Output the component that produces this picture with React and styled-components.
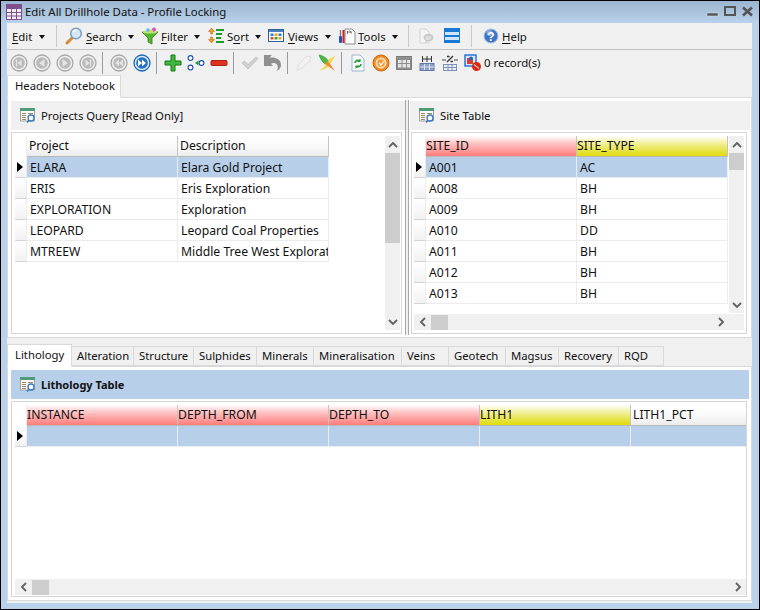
import React from "react";
import styled, { createGlobalStyle } from "styled-components";

const FONT = `"Noto Sans", "Open Sans", "Liberation Sans", sans-serif`;

const Global = createGlobalStyle`
  html, body { margin: 0; padding: 0; background: #b9d1ea; }
  * { box-sizing: border-box; }
`;

const Win = styled.div`
  width: 760px; height: 610px; border: 1px solid #000; background: #b9d1ea;
  display: flex; flex-direction: column; overflow: hidden;
  font: 11.4px/16px ${FONT}; color: #111;
`;
const TitleBar = styled.div`
  height: 22px; flex: none; display: flex; align-items: center; padding: 0 3px 0 5px;
  background: linear-gradient(#9cb5d0, #b9d1ea);
`;
const TitleText = styled.div`margin-left: 3px; flex: 1; white-space: nowrap;`;
const Client = styled.div`
  height: 580px; margin: 0 7px 0 6px; background: #f0f0f0; display: flex; flex-direction: column;
`;
const MenuBar = styled.div`
  height: 27px; flex: none; display: flex; align-items: center; border-bottom: 1px solid #c2c2c2;
`;
const MenuBtn = styled.div`
  width: ${p => p.$w}px; flex: none; display: flex; align-items: center; height: 100%;
`;
const MenuLabel = styled.span`
  width: ${p => p.$w}px; margin-left: ${p => p.$ml ?? 3}px; margin-top: 2px; flex: none; white-space: nowrap;
  u { text-underline-offset: 2px; }
`;
const Caret = styled.i`
  width: 0; height: 0; margin-left: ${p => p.$ml || 6.5}px; margin-top: 1px; flex: none;
  border-left: 3.5px solid transparent; border-right: 3.5px solid transparent; border-top: 4px solid #111;
`;
const BarSep = styled.div`
  width: 1px; height: 22px; flex: none; background: #c8c8c8; margin-left: ${p => p.$ml}px; margin-right: ${p => p.$mr}px;
`;
const NavBar = styled.div`height: 25px; flex: none; display: flex; align-items: center;`;
const Cell = styled.div`
  width: 23px; height: 22px; flex: none; display: flex; align-items: center; justify-content: center;
  margin-left: ${p => p.$ml || 0}px;
`;
const NavSep = styled.div`
  width: 6px; height: 22px; margin-right: 2px; flex: none; position: relative;
  &::before { content: ""; position: absolute; left: 3px; top: 0; bottom: 0; width: 1px; background: #9a9a9a; }
`;
const Records = styled.div`white-space: nowrap;`;
const TabStrip = styled.div`
  height: ${p => p.$h}px; flex: none; display: flex; align-items: flex-end; margin-top: ${p => p.$mt || 0}px; position: relative; z-index: 1;
`;
const Tab = styled.div`
  width: ${p => p.$w}px; flex: none; white-space: nowrap; padding-left: ${p => (p.$active ? 7 : 5)}px;
  height: ${p => (p.$active ? 23 : 20)}px; line-height: ${p => (p.$active ? 20 : 18)}px; font-size: 11.3px;
  border: 1px solid #d9d9d9; border-left-width: ${p => (p.$active ? 1 : 0)}px;
  border-bottom-color: ${p => (p.$active ? "#fff" : "#d9d9d9")};
  background: ${p => (p.$active ? "#fff" : "#f0f0f0")};
  margin-bottom: ${p => (p.$active ? -1 : 0)}px;
`;
const UpperPanel = styled.div`
  height: 241px; flex: none; background: #fff; border: 1px solid #d9d9d9; padding: 3px 1px 3px 3px; display: flex;
`;
const Pane = styled.div`width: ${p => p.$w}px; flex: none; display: flex; flex-direction: column;`;
const Splitter = styled.div`
  width: 4px; margin: -1px 1px -1px 0; flex: none; border-left: 1px solid #a8a8a8; border-right: 1px solid #a8a8a8; background: #f0f0f0;
`;
const PaneHead = styled.div`
  height: 29px; flex: none; display: flex; align-items: center; gap: 4px; padding-left: 8px;
  background: ${p => (p.$blue ? "#b8cfe9" : "#f0f0f0")};
  font-weight: ${p => (p.$blue ? 700 : 400)};
  font-size: ${p => (p.$blue ? 11 : 11.3)}px;
`;
const GridBox = styled.div`
  flex: 1; min-height: 0; margin: 2px ${p => p.$mr}px 0 ${p => p.$ml || 0}px; border: 1px solid #d6d6d6; background: #fff;
  padding: 3px 0 ${p => p.$pb}px ${p => p.$pl}px; display: flex; overflow: hidden;
`;
const GridMain = styled.div`flex: 1; min-width: 0; display: flex; flex-direction: column;`;
const Rows = styled.div`flex: 1; min-height: 0; overflow: hidden;`;
const Row = styled.div`display: flex; height: 21px; width: ${p => p.$w}px;`;
const Indicator = styled.div`
  width: 12px; flex: none; border-bottom: 1px solid ${p => (p.$head ? "transparent" : "#d4d4d4")};
  background: ${p => (p.$head ? "#fff" : "linear-gradient(#fff,#f2f2f2)")};
  border-right: 1px solid #ececec; display: flex; align-items: center; padding-left: 2px;
  &::after {
    content: ""; display: ${p => (p.$on ? "block" : "none")}; width: 0; height: 0;
    border-left: 6px solid #000; border-top: 5px solid transparent; border-bottom: 5px solid transparent;
  }
`;
const HEAD = {
  red: "linear-gradient(#fff 0%, #ffc6c6 35%, #ff7c7c 100%)",
  yellow: "linear-gradient(#fff 0%, #f0ee90 40%, #dfdb0a 100%)",
  plain: "linear-gradient(#fff 0%, #fafafa 50%, #ececec 100%)",
};
const HeadCell = styled.div`
  width: 151px; flex: none; height: 21px; line-height: 20px; font-size: 12.2px; padding-left: ${p => (p.$tone ? 0 : 2)}px; white-space: nowrap; overflow: hidden;
  background: ${p => HEAD[p.$tone || "plain"]};
  border-right: 1px solid #c4c4c4; border-bottom: 1px solid #b9b9b9;
`;
const DataCell = styled.div`
  width: 151px; flex: none; height: 21px; line-height: 21px; font-size: 12.2px; padding-left: 3px; white-space: nowrap; overflow: hidden;
  background: ${p => (p.$sel ? "#b8cfe9" : "#fff")};
  border-right: 1px solid ${p => (p.$sel ? "#e6eef7" : "#ececec")}; border-bottom: 1px solid #ececec;
`;
const VScroll = styled.div`
  width: 15px; flex: none; background: #f0f0f0; margin: ${p => p.$m}; display: flex; flex-direction: column; align-items: center;
`;
const VThumb = styled.div`width: 15px; height: ${p => p.$h}px; flex: none; background: #cdcdcd;`;
const VSpace = styled.div`flex: 1;`;
const ArrowBox = styled.div`height: 17px; flex: none; display: flex; align-items: center; justify-content: center;`;
const HScroll = styled.div`
  height: 16px; flex: none; background: #f0f0f0; display: flex; align-items: center; margin-right: ${p => p.$mr || 0}px;
`;
const HArrow = styled.div`width: 17px; height: 16px; flex: none; display: flex; align-items: center; justify-content: center;`;
const HThumb = styled.div`width: 17px; height: 15px; flex: none; background: #cdcdcd;`;
const HSpace = styled.div`flex: 1;`;
const HTail = styled.div`width: ${p => p.$w}px; flex: none;`;
const LowerPanel = styled.div`
  flex: none; height: 235px; background: #fff; border: 1px solid #d9d9d9; padding: 3px 2px 3px 3px; display: flex; flex-direction: column;
`;

const Svg = ({ s = 18, children }) => <svg width={s} height={s} viewBox={`0 0 ${s} ${s}`} style={{ display: "block", flex: "none" }}>{children}</svg>;

const AppIcon = () => (
  <Svg s={16}>
    <rect width="16" height="16" fill="#7d4f8c" />
    <rect x="1" y="5" width="14" height="10" fill="#f4eff6" />
    <path d="M5.500 5v10M10.500 5v10M1 8.500h14M1 12h14" stroke="#7d4f8c" strokeWidth="1" />
  </Svg>
);
const WinControls = () => (
  <svg width="50" height="12" viewBox="0 0 50 12" style={{ display: "block", flex: "none" }}>
    <rect x="1" y="7" width="11" height="3" fill="#555" stroke="#d6e2ef" strokeWidth=".5" />
    <rect x="19" y="1" width="10" height="8" fill="none" stroke="#555" strokeWidth="2" />
    <path d="M37 1.500l9 8M46 1.500l-9 8" stroke="#555" strokeWidth="2.600" />
  </svg>
);
const SearchIcon = () => (
  <Svg>
    <path d="M8 10L2 16" stroke="#d98a35" strokeWidth="3" strokeLinecap="round" />
    <circle cx="11" cy="6.500" r="5.300" fill="#d5e7f6" stroke="#7f9cb6" strokeWidth="1.500" />
    <path d="M8 5c1-1.500 2.500-2 4-1.800" stroke="#fff" strokeWidth="1.400" fill="none" />
  </Svg>
);
const FilterIcon = () => (
  <Svg>
    <path d="M1 5h16l-6 6v6l-4-2v-4z" fill="#55b52c" stroke="#2e7d16" strokeWidth=".8" />
    <ellipse cx="9" cy="5" rx="7.500" ry="1.600" fill="#b6e67e" />
    <circle cx="13" cy="2.500" r="2" fill="#e04fc0" />
    <circle cx="7" cy="3" r="1.800" fill="#4fc0e0" />
    <circle cx="10" cy="4" r="1.400" fill="#f0d040" />
  </Svg>
);
const SortIcon = () => (
  <Svg>
    <path d="M4.500 1l3 3.500h-2v2.500h-2V4.500h-2zM4.500 16l3-3.500h-2V10h-2v2.500h-2z" fill="#ef9a2c" stroke="#b86a10" strokeWidth=".5" />
    <path d="M9 3h8M9 7h6M9 11h5M9 15h8" stroke="#189c2c" strokeWidth="2" />
  </Svg>
);
const ViewsIcon = () => (
  <Svg s={16}>
    <rect x=".5" y="1.500" width="15" height="12" fill="#fff" stroke="#2f5e9c" />
    <rect x="1" y="2" width="14" height="2" fill="#4a7fc0" />
    <rect x="2.500" y="5.500" width="3" height="2.500" fill="#3c78c8" />
    <rect x="6.500" y="5.500" width="3" height="2.500" fill="#e8a020" />
    <rect x="10.500" y="5.500" width="3" height="2.500" fill="#3c78c8" />
    <rect x="2.500" y="9" width="3" height="2.500" fill="#e05030" />
    <rect x="6.500" y="9" width="3" height="2.500" fill="#40a040" />
    <rect x="10.500" y="9" width="3" height="2.500" fill="#e8a020" />
  </Svg>
);
const ToolsIcon = () => (
  <Svg>
    <path d="M7 2h7l3 3v12H7z" fill="#fff" stroke="#8a8a8a" />
    <path d="M9.500 4v3M11.500 3.500l2 3M9 5h5" stroke="#555" strokeWidth=".8" />
    <path d="M2.500 3v6" stroke="#777" strokeWidth="1.300" />
    <rect x="1" y="9" width="3" height="7" rx="1" fill="#1e56b8" />
    <path d="M5.500 3v13" stroke="#d02020" strokeWidth="2" />
  </Svg>
);
const DocBubbleIcon = () => (
  <Svg s={16}>
    <path d="M2 1h6l3 3v11H2z" fill="#f4f4f4" stroke="#d2d2d2" />
    <ellipse cx="10.500" cy="9.500" rx="5" ry="3.800" fill="#c8c8c8" />
    <path d="M7.500 9h6M7.500 11h5" stroke="#f2f2f2" />
    <path d="M8 12l-1 3 3-2z" fill="#c8c8c8" />
  </Svg>
);
const SplitIcon = () => (
  <Svg s={16}>
    <rect x=".5" y=".5" width="15" height="14" fill="#fff" stroke="#1878d4" />
    <rect x="1" y="1" width="14" height="3" fill="#1878d4" />
    <rect x="1" y="7" width="14" height="2" fill="#1878d4" />
    <rect x="1" y="12" width="14" height="2" fill="#1878d4" />
    <rect x="1" y="4" width="14" height="3" fill="#cfe6fa" />
    <rect x="1" y="9" width="14" height="3" fill="#cfe6fa" />
  </Svg>
);
const HelpIcon = () => (
  <Svg s={16}>
    <circle cx="8" cy="8" r="7" fill="#3f74c4" stroke="#a8c4e6" />
    <circle cx="6.500" cy="5" r="3" fill="#86abe0" />
    <text x="8" y="12.500" textAnchor="middle" fontSize="12" fontWeight="700" fontFamily="Liberation Sans" fill="#fff">?</text>
  </Svg>
);
const TableIcon = () => (
  <Svg>
    <path d="M1.500 2h14v12h-14z" fill="#fafafa" stroke="#9aa5a0" />
    <rect x="1" y="1" width="15" height="3" fill="#4f9a78" />
    <path d="M3 6.500h4M3 8.500h4M3 10.500h4M3 12.500h4M9 6.500h5" stroke="#a08868" />
    <circle cx="12" cy="11" r="3" fill="#fff" stroke="#3c78c0" strokeWidth="1.300" />
    <path d="M10 13.200L8 15.500" stroke="#3c78c0" strokeWidth="1.600" />
  </Svg>
);

const NavCircle = ({ kind, active }) => {
  const c = active ? "#1f6fc4" : "#b9b9b9";
  const fg = active ? "#fff" : "#e4e4e4";
  const marks = {
    first: <><path d="M11.500 5.500v7L7.500 9z" fill={fg} /><path d="M6.500 5.500v7" stroke={fg} strokeWidth="1.400" /></>,
    prev: <path d="M11.500 5v8L6 9z" fill={fg} />,
    next: <path d="M6.500 5v8L12 9z" fill={fg} />,
    last: <><path d="M6.500 5.500v7l4-3.500z" fill={fg} /><path d="M11.500 5.500v7" stroke={fg} strokeWidth="1.400" /></>,
    back: <path d="M9 5.500v7L5 9zM13 5.500v7L9 9z" fill={fg} />,
    fwd: <path d="M5 5.500v7L9 9zM9 5.500v7L13 9z" fill={fg} />,
  };
  return (
    <Svg>
      <circle cx="9" cy="9" r="8" fill={active ? "#d8e8f8" : "#ededed"} stroke={active ? "#1c68b8" : "#a8a8a8"} strokeWidth="1.300" />
      <circle cx="9" cy="9" r="5.800" fill={c} />
      {marks[kind]}
    </Svg>
  );
};
const PlusIcon = () => (
  <Svg><path d="M7 1h4v6h6v4h-6v6H7v-6H1V7h6z" fill="#3fb63f" stroke="#167816" /></Svg>
);
const BranchIcon = () => (
  <Svg>
    <circle cx="3.500" cy="4" r="2.400" fill="#fff" stroke="#1c50b0" strokeWidth="1.100" />
    <circle cx="3.500" cy="13.500" r="2.400" fill="#fff" stroke="#1c50b0" strokeWidth="1.100" />
    <circle cx="14.500" cy="9" r="2.400" fill="#fff" stroke="#1c50b0" strokeWidth="1.100" />
    <path d="M8 9l3.500-2.500v5z" fill="#2a9a3a" />
  </Svg>
);
const MinusIcon = () => (
  <Svg><rect x="1" y="6.500" width="16" height="5" rx="1" fill="#e03020" stroke="#a82418" /></Svg>
);
const CheckIcon = () => (
  <Svg><path d="M1 9l2.500-2 3.500 3.500L15 3l2 1.500L7 15z" fill="#cfcfcf" stroke="#b4b4b4" strokeWidth=".6" /></Svg>
);
const UndoIcon = () => (
  <Svg>
    <path d="M0 1l8 0-2.500 2.800C10 2.500 17 5 17 10.500c0 3-1.500 5.500-4.500 6.500 2-2.500 2-6.500-1.500-7.800-1.500-.5-3-.3-4 .6L9 12H0z" fill="#8f8f8f" />
  </Svg>
);
const PenIcon = () => (
  <Svg><path d="M2 16l2-6 8-8 4 1-1 4-8 7z" fill="#f2f2f2" stroke="#dedede" /></Svg>
);
const XFunnelIcon = () => (
  <Svg>
    <path d="M17 2l-6 3-5 8-5 4 8-3 5-7z" fill="#f4d84a" />
    <path d="M1 1c3 0 8 3 9 6l-3 3C4 8 2 4 1 1z" fill="#4cb84c" stroke="#2a8a2a" strokeWidth=".5" />
    <path d="M10 7l7 10-10-7z" fill="#f08a28" />
  </Svg>
);
const RefreshDocIcon = () => (
  <Svg>
    <path d="M3 1h8l4 4v12H3z" fill="#f6fafc" stroke="#9fb6c8" />
    <path d="M6 9a3 3 0 0 1 5-2M12 10a3 3 0 0 1-5 2" fill="none" stroke="#1f9a2c" strokeWidth="1.600" />
    <path d="M11.500 4.500v3.500H8zM6.500 15v-3.500H10z" fill="#1f9a2c" />
  </Svg>
);
const OrangeIcon = () => (
  <Svg>
    <circle cx="9" cy="9" r="8" fill="#f08a24" stroke="#c86a10" />
    <circle cx="9" cy="9" r="5.500" fill="#fde0b8" />
    <circle cx="9" cy="9" r="3.800" fill="#f29a38" />
    <path d="M7 9l2 2 3-4" fill="none" stroke="#fff" strokeWidth="1.200" />
  </Svg>
);
const CalendarIcon = () => (
  <Svg>
    <rect x="1.500" y="2.500" width="15" height="13" fill="#8e8e8e" stroke="#7c7c7c" />
    <rect x="3" y="6" width="3.500" height="3" fill="#e4e4e4" /><rect x="7.500" y="6" width="3.500" height="3" fill="#e4e4e4" /><rect x="12" y="6" width="3" height="3" fill="#e4e4e4" />
    <rect x="3" y="10" width="3.500" height="3.500" fill="#e4e4e4" /><rect x="7.500" y="10" width="3.500" height="3.500" fill="#e4e4e4" /><rect x="12" y="10" width="3" height="3.500" fill="#e4e4e4" />
  </Svg>
);
const ColWidthIcon = () => (
  <Svg>
    <path d="M4.500 2v6M13.500 2v6M9 2v6M5 5h8" stroke="#333" strokeWidth="1" />
    <rect x="2" y="9.500" width="14" height="7" fill="#8f9fc8" stroke="#6678a8" />
    <path d="M2 13h14M6.500 10v6M11.500 10v6" stroke="#dfe4f2" />
  </Svg>
);
const PercentIcon = () => (
  <Svg>
    <path d="M1 6h4M13 6h4" stroke="#444" strokeWidth="1" />
    <path d="M6 8l6-6M6 2.500h2.500M9.500 7.500H12" stroke="#333" strokeWidth="1.400" />
    <rect x="2.500" y="10.500" width="13" height="6" fill="#e9eefa" stroke="#7f90b8" />
    <path d="M2.500 13.500h13M7 10.500v6M11 10.500v6" stroke="#7f90b8" />
  </Svg>
);
const RecordIcon = () => (
  <Svg>
    <rect x="1" y="1" width="11" height="11" fill="#dbe8f8" stroke="#1f6fd0" strokeWidth="1.400" />
    <rect x="3" y="4" width="6" height="6" fill="#d84030" />
    <circle cx="7" cy="4.500" r="2" fill="#3060c0" />
    <circle cx="12.500" cy="12.500" r="4.500" fill="#d82818" />
    <path d="M10 10.500l5 4" stroke="#fff" strokeWidth="1" />
  </Svg>
);
const Chevron = ({ dir }) => {
  const d = { up: "M1 6l4-4 4 4", down: "M1 2l4 4 4-4", left: "M6 1L2 5l4 4", right: "M2 1l4 4-4 4" }[dir];
  const s = dir === "up" || dir === "down";
  return (
    <svg width={s ? 10 : 8} height={s ? 8 : 10} viewBox={s ? "0 0 10 8" : "0 0 8 10"} style={{ display: "block" }}>
      <path d={d} fill="none" stroke="#606060" strokeWidth="1.800" />
    </svg>
  );
};

const VBar = ({ thumb, m }) => (
  <VScroll $m={m}>
    <ArrowBox><Chevron dir="up" /></ArrowBox>
    <VThumb $h={thumb} />
    <VSpace />
    <ArrowBox><Chevron dir="down" /></ArrowBox>
  </VScroll>
);
const HBar = ({ mr, tail = 0 }) => (
  <HScroll $mr={mr}>
    <HArrow><Chevron dir="left" /></HArrow>
    <HThumb />
    <HSpace />
    <HArrow><Chevron dir="right" /></HArrow>
    <HTail $w={tail} />
  </HScroll>
);

const HeaderRow = ({ cols, w }) => (
  <Row $w={w}>
    <Indicator $head />
    {cols.map(c => <HeadCell key={c.t} $tone={c.tone}>{c.t}</HeadCell>)}
  </Row>
);
const DataRow = ({ vals, sel, w }) => (
  <Row $w={w}>
    <Indicator $on={sel} />
    {vals.map((v, i) => <DataCell key={i} $sel={sel}>{v}</DataCell>)}
  </Row>
);

const projects = [
  ["ELARA", "Elara Gold Project"],
  ["ERIS", "Eris Exploration"],
  ["EXPLORATION", "Exploration"],
  ["LEOPARD", "Leopard Coal Properties"],
  ["MTREEW", "Middle Tree West Exploration"],
];
const sites = [["A001", "AC"], ["A008", "BH"], ["A009", "BH"], ["A010", "DD"], ["A011", "BH"], ["A012", "BH"], ["A013", "BH"]];
const lowerTabs = [
  ["Alteration", 62], ["Structure", 60], ["Sulphides", 63], ["Minerals", 57], ["Mineralisation", 88],
  ["Veins", 47], ["Geotech", 57], ["Magsus", 53], ["Recovery", 60], ["RQD", 45],
];
const navA = ["first", "prev", "next", "last"];

export default function App() {
  return (
    <>
      <Global />
      <Win>
        <TitleBar>
          <AppIcon />
          <TitleText>Edit All Drillhole Data - Profile Locking</TitleText>
          <WinControls />
        </TitleBar>
        <Client>
          <MenuBar>
            <MenuBtn $w={43}><MenuLabel $w={20} $ml={5}><u>E</u>dit</MenuLabel><Caret /></MenuBtn>
            <BarSep $ml={6} $mr={8} />
            <MenuBtn $w={76}><SearchIcon /><MenuLabel $w={35}><u>S</u>earch</MenuLabel><Caret /></MenuBtn>
            <MenuBtn $w={66}><FilterIcon /><MenuLabel $w={26} $ml={2}><u>F</u>ilter</MenuLabel><Caret /></MenuBtn>
            <MenuBtn $w={61}><SortIcon /><MenuLabel $w={21} $ml={2}>S<u>o</u>rt</MenuLabel><Caret /></MenuBtn>
            <MenuBtn $w={70}><ViewsIcon /><MenuLabel $w={30} $ml={4}><u>V</u>iews</MenuLabel><Caret $ml={7} /></MenuBtn>
            <MenuBtn $w={62}><ToolsIcon /><MenuLabel $w={27} $ml={2}><u>T</u>ools</MenuLabel><Caret /></MenuBtn>
            <BarSep $ml={8} $mr={5} />
            <Cell><DocBubbleIcon /></Cell>
            <Cell $ml={3}><SplitIcon /></Cell>
            <BarSep $ml={8} $mr={11} />
            <MenuBtn $w={60}><HelpIcon /><MenuLabel $w={26} $ml={3}><u>H</u>elp</MenuLabel></MenuBtn>
          </MenuBar>
          <NavBar>
            {navA.map(k => <Cell key={k}><NavCircle kind={k} /></Cell>)}
            <NavSep />
            <Cell><NavCircle kind="back" /></Cell>
            <Cell><NavCircle kind="fwd" active /></Cell>
            <NavSep />
            <Cell><PlusIcon /></Cell>
            <Cell><BranchIcon /></Cell>
            <Cell><MinusIcon /></Cell>
            <NavSep />
            <Cell><CheckIcon /></Cell>
            <Cell><UndoIcon /></Cell>
            <NavSep />
            <Cell><PenIcon /></Cell>
            <Cell><XFunnelIcon /></Cell>
            <NavSep />
            <Cell><RefreshDocIcon /></Cell>
            <Cell><OrangeIcon /></Cell>
            <Cell><CalendarIcon /></Cell>
            <Cell><ColWidthIcon /></Cell>
            <Cell><PercentIcon /></Cell>
            <Cell><RecordIcon /></Cell>
            <Records>0 record(s)</Records>
          </NavBar>
          <TabStrip $h={22}>
            <Tab $active $w={114}>Headers Notebook</Tab>
          </TabStrip>
          <UpperPanel>
            <Pane $w={394}>
              <PaneHead><TableIcon />Projects Query [Read Only]</PaneHead>
              <GridBox $mr={3} $pl={3} $pb={3}>
                <GridMain>
                  <Rows>
                    <HeaderRow w={314} cols={[{ t: "Project" }, { t: "Description" }]} />
                    {projects.map((p, i) => <DataRow key={p[0]} vals={p} sel={i === 0} w={314} />)}
                  </Rows>
                </GridMain>
                <VBar thumb={90} m="0 1px 0 0" />
              </GridBox>
            </Pane>
            <Splitter />
            <Pane $w={340}>
              <PaneHead><TableIcon />Site Table</PaneHead>
              <GridBox $ml={1} $mr={3} $pl={2} $pb={3}>
                <GridMain>
                  <Rows>
                    <HeaderRow w={314} cols={[{ t: "SITE_ID", tone: "red" }, { t: "SITE_TYPE", tone: "yellow" }]} />
                    {sites.map((p, i) => <DataRow key={p[0]} vals={p} sel={i === 0} w={314} />)}
                  </Rows>
                  <HBar mr={-16} tail={15} />
                </GridMain>
                <VBar thumb={17} m="0 2px 17px 1px" />
              </GridBox>
            </Pane>
          </UpperPanel>
          <TabStrip $h={22} $mt={6}>
            <Tab $active $w={65}>Lithology</Tab>
            {lowerTabs.map(([t, w]) => <Tab key={t} $w={w}>{t}</Tab>)}
          </TabStrip>
          <LowerPanel>
            <PaneHead $blue><TableIcon />Lithology Table</PaneHead>
            <GridBox $mr={2} $pl={3} $pb={1}>
              <GridMain>
                <Rows>
                  <HeaderRow w={730} cols={[
                    { t: "INSTANCE", tone: "red" }, { t: "DEPTH_FROM", tone: "red" }, { t: "DEPTH_TO", tone: "red" },
                    { t: "LITH1", tone: "yellow" }, { t: "LITH1_PCT" },
                  ]} />
                  <DataRow vals={["", "", "", "", ""]} sel w={730} />
                </Rows>
                <HBar />
              </GridMain>
            </GridBox>
          </LowerPanel>
        </Client>
      </Win>
    </>
  );
}
